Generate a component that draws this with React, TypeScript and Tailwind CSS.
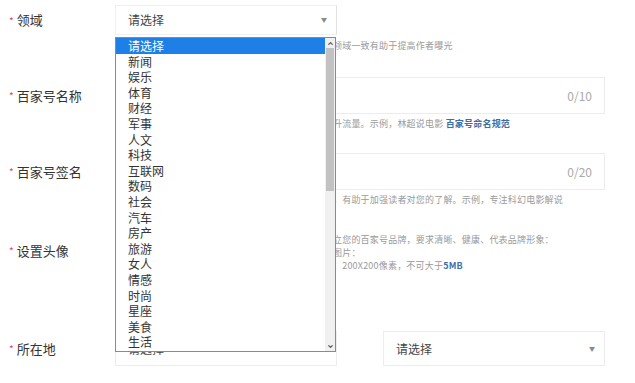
import { ChevronDown } from "lucide-react";

const categories = [
  "请选择",
  "新闻",
  "娱乐",
  "体育",
  "财经",
  "军事",
  "人文",
  "科技",
  "互联网",
  "数码",
  "社会",
  "汽车",
  "房产",
  "旅游",
  "女人",
  "情感",
  "时尚",
  "星座",
  "美食",
  "生活",
];

function Label({ text }: { text: string }) {
  return (
    <div className="flex w-[115px] shrink-0 items-center pl-[9px] text-[13px] text-[#333]">
      <span className="mr-[3px] text-[10px] text-[#e5484d]">*</span>
      {text}
    </div>
  );
}

function Arrow() {
  return <span className="text-[6px] leading-none text-[#888]">▼</span>;
}

function Select({ className = "" }: { className?: string }) {
  return (
    <div
      className={`flex h-[35px] w-[222px] items-center justify-between border border-[#ececec] pl-[12px] pr-[9px] text-[12px] text-[#444] ${className}`}
    >
      <span>请选择</span>
      <Arrow />
    </div>
  );
}

// the start of each hint is covered by the open dropdown, so only the tail shows
function Hint({ children }: { children: React.ReactNode }) {
  return (
    <div className="whitespace-nowrap pl-[218px] text-[9px] leading-[13px] tracking-[0.2px] text-[#9a9a9a]">
      {children}
    </div>
  );
}

function CountInput({ count }: { count: string }) {
  return (
    <div className="flex h-[37px] w-[490px] items-center justify-end border border-[#ececec] pr-[12px] text-[12px] text-[#aaa]">
      {count}
    </div>
  );
}

export default function App() {
  return (
    <div className="relative h-[383px] w-[635px] overflow-hidden bg-white pt-[5px] font-['Noto_Sans_CJK_SC','Noto_Sans',sans-serif]">
      {/* 领域 */}
      <div className="flex h-[30px]">
        <Label text="领域" />
        <div className="flex h-[30px] w-[222px] items-center justify-between border border-[#f0f0f0] border-r-[#e2e2e2] pl-[12px] pr-[9px] text-[12px] text-[#444]">
          <span>请选择</span>
          <Arrow />
        </div>
      </div>
      <div className="mt-[4px] pl-[115px]">
        <Hint>领域一致有助于提高作者曝光</Hint>
      </div>

      {/* 百家号名称 */}
      <div className="mt-[25px] flex">
        <Label text="百家号名称" />
        <CountInput count="0/10" />
      </div>
      <div className="mt-[3px] pl-[115px]">
        <Hint>
          升流量。示例，林超说电影 <span className="font-semibold text-[#3a6ea8]">百家号命名规范</span>
        </Hint>
      </div>

      {/* 百家号签名 */}
      <div className="mt-[23px] flex">
        <Label text="百家号签名" />
        <CountInput count="0/20" />
      </div>
      <div className="mt-[3px] pl-[115px]">
        <Hint>，有助于加强读者对您的了解。示例，专注科幻电影解说</Hint>
      </div>

      {/* 设置头像 */}
      <div className="mt-[27px] flex">
        <div className="mt-[8px] self-start">
          <Label text="设置头像" />
        </div>
        <div className="flex flex-col">
          <Hint>立您的百家号品牌，要求清晰、健康、代表品牌形象：</Hint>
          <Hint>图片：</Hint>
          <Hint>
            ：200X200像素，不可大于<span className="font-semibold text-[#3a6ea8]">5MB</span>
          </Hint>
        </div>
      </div>

      {/* 所在地 */}
      <div className="mt-[59px] flex h-[35px]">
        <Label text="所在地" />
        <Select />
        <Select className="ml-[46px]" />
      </div>

      {/* open dropdown list */}
      <div className="absolute left-[115px] top-[37px] flex h-[315px] w-[221px] border border-[#8a8a8a] bg-white">
        <ul className="flex-1 text-[12px] text-[#333]">
          {categories.map((c, i) => (
            <li
              key={c}
              className={`h-[15.6px] pl-[12px] leading-[15.6px] ${
                i === 0 ? "bg-[#1e7fe6] text-white" : ""
              }`}
            >
              {c}
            </li>
          ))}
        </ul>
        <div className="flex w-[10px] flex-col bg-[#f0f0f0]">
          <div className="flex h-[10px] items-center justify-center">
            <ChevronDown className="size-[7px] rotate-180 text-[#555]" strokeWidth={4} />
          </div>
          <div className="mx-[1px] h-[143px] bg-[#c2c2c2]" />
          <div className="flex-1" />
          <div className="flex h-[10px] items-center justify-center">
            <ChevronDown className="size-[7px] text-[#555]" strokeWidth={4} />
          </div>
        </div>
      </div>
    </div>
  );
}
